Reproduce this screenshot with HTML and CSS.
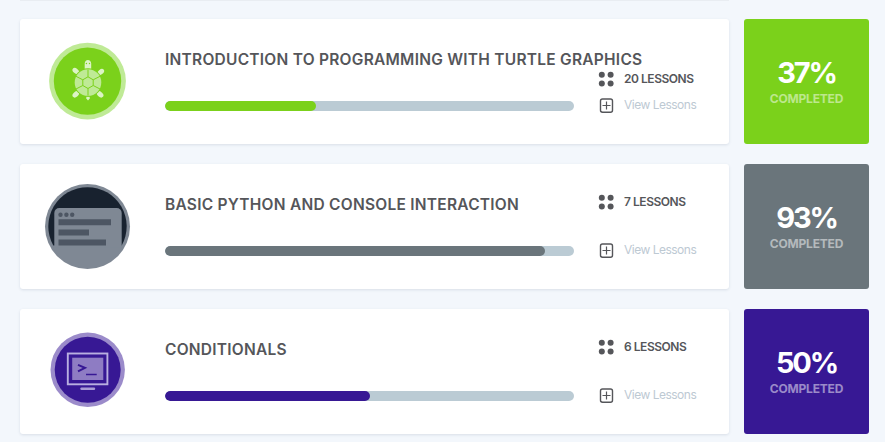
FILE: index.html
```html
<!DOCTYPE html>
<html lang="en">
<head>
<meta charset="utf-8">
<title>Lessons</title>
<link rel="stylesheet" href="styles.css">
</head>
<body>
<svg width="0" height="0" class="defs">
  <symbol id="dots" viewBox="0 0 16 16"><g fill="#55565a"><circle cx="3.8" cy="3.8" r="3"/><circle cx="12.6" cy="3.8" r="3"/><circle cx="3.8" cy="12.5" r="3"/><circle cx="12.6" cy="12.5" r="3"/></g></symbol>
  <symbol id="plus" viewBox="0 0 16 16"><g fill="none" stroke="#55565a"><rect x="2.5" y="2" width="12" height="13.2" rx="2" stroke-width="1.4"/><path d="M8.5 4.500v8M4.500 8.500h8" stroke-width="1.2"/></g></symbol>
</svg>
<div class="previous"></div>
<main class="list">
  <section class="row green">
    <div class="card crowded">
      <svg class="badge" viewBox="-0.5 0.5 90 90">
        <circle cx="45" cy="44.6" r="38.4" fill="#bfea96"/><circle cx="45" cy="44.6" r="33.7" fill="#7bd11b"/>
        <g fill="#dcf4c5">
          <path d="M42.2 32.5V27c0-2 1.400-3.600 3.200-3.600s3.300 1.600 3.300 3.600v5.500z"/>
          <ellipse cx="33.300" cy="34.500" rx="2.500" ry="3.800" transform="rotate(-48 33.300 34.500)"/>
          <ellipse cx="58.300" cy="35.500" rx="2.500" ry="3.800" transform="rotate(48 58.300 35.500)"/>
          <ellipse cx="33.300" cy="57.800" rx="2.500" ry="3.800" transform="rotate(48 33.300 57.800)"/>
          <ellipse cx="57.600" cy="57.800" rx="2.500" ry="3.800" transform="rotate(-48 57.600 57.800)"/>
          <path d="M43.800 60h3.400v2l-1.700 2-1.700-2z"/>
        </g>
        <circle cx="45.500" cy="46" r="14.300" fill="#7bd11b"/><circle cx="45.500" cy="46" r="13.300" fill="#bfea96"/>
        <path d="M45.500 40.300l5.200 3v5.700l-5.200 3-5.200-3v-5.700zM45.500 40.300V33M45.500 52v7M50.700 43.300l6.800-3.500M40.300 43.300l-6.800-3.500M50.700 49l6.800 3.500M40.300 49l-6.800 3.500" fill="none" stroke="#7bd11b" stroke-width="1"/>
        <circle cx="43.900" cy="27" r=".7" fill="#7bd11b"/><circle cx="47" cy="27" r=".7" fill="#7bd11b"/>
      </svg>
      <div class="main"><h2 class="title">INTRODUCTION TO PROGRAMMING WITH TURTLE GRAPHICS</h2><div class="track"><div class="fill" style="width:37%"></div></div></div>
      <div class="meta"><div class="item count"><svg><use href="#dots"/></svg><span>20 LESSONS</span></div><div class="item view"><svg><use href="#plus"/></svg><span>View Lessons</span></div></div>
    </div>
    <div class="tile"><strong>37%</strong><span>COMPLETED</span></div>
  </section>
  <section class="row gray">
    <div class="card">
      <svg class="badge" viewBox="-0.5 0.5 90 90">
        <circle cx="45" cy="45" r="42.500" fill="#7f8894"/>
        <path d="M10.800 64A39.200 39.200 0 1 1 79.200 64z" fill="#18222f"/>
        <path d="M11.800 66V31.500a5 5 0 0 1 5-5h57.400a5 5 0 0 1 5 5V66z" fill="#7f8894"/>
        <g fill="#4d5663"><circle cx="18" cy="33.200" r="2.200"/><circle cx="23.900" cy="33.200" r="2.200"/><circle cx="29.700" cy="33.200" r="2.200"/><path d="M16 37.800h52.500v6H16zM16 47.900h30.500v6H16zM16 57.900h47.500v6H16z"/></g>
      </svg>
      <div class="main"><h2 class="title">BASIC PYTHON AND CONSOLE INTERACTION</h2><div class="track"><div class="fill" style="width:93%"></div></div></div>
      <div class="meta"><div class="item count"><svg><use href="#dots"/></svg><span>7 LESSONS</span></div><div class="item view"><svg><use href="#plus"/></svg><span>View Lessons</span></div></div>
    </div>
    <div class="tile"><strong>93%</strong><span>COMPLETED</span></div>
  </section>
  <section class="row purple">
    <div class="card">
      <svg class="badge" viewBox="-0.5 0.5 90 90">
        <circle cx="45.200" cy="43.300" r="37.200" fill="#9b8bca"/><circle cx="45.200" cy="43.300" r="33" fill="#371894"/>
        <rect x="25.300" y="27" width="39.600" height="30.800" fill="none" stroke="#b9afe0" stroke-width="1.900"/>
        <path d="M29.700 31.200h31.100v22.300H29.700z" fill="#8e7cc3"/>
        <path d="M35.500 38.300l7 3.100-7 3.500" fill="none" stroke="#371894" stroke-width="2"/><path d="M43.500 48h10.700" stroke="#371894" stroke-width="1.500"/>
        <path d="M39 62.200h12.500" stroke="#a99bd5" stroke-width="2.400" stroke-linecap="round"/>
      </svg>
      <div class="main"><h2 class="title">CONDITIONALS</h2><div class="track"><div class="fill" style="width:50%"></div></div></div>
      <div class="meta"><div class="item count"><svg><use href="#dots"/></svg><span>6 LESSONS</span></div><div class="item view"><svg><use href="#plus"/></svg><span>View Lessons</span></div></div>
    </div>
    <div class="tile"><strong>50%</strong><span>COMPLETED</span></div>
  </section>
</main>
</body>
</html>
```
FILE: styles.css
```css
* { box-sizing: border-box; }
body { margin: 0; height: 442px; overflow: hidden; background: #f3f7fc; font-family: Inter, sans-serif; color: #55565a; }
.defs { display: block; height: 0; }
.previous { width: 709px; height: 1px; margin-left: 20px; background: #e9edf2; }
.list { display: flex; flex-direction: column; gap: 20px; padding: 18px 16px 0 20px; }
.row { display: flex; gap: 15px; height: 125px; }
.card { display: flex; width: 709px; background: #fff; border-radius: 3px; box-shadow: 0 1px 3px rgba(40, 60, 90, .13); }
.badge { width: 90px; height: 90px; margin: 18px 33px 0 22px; flex: none; }
.main { width: 409px; padding-top: 30px; }
.title { margin: 0; height: 22px; font-size: 15.500px; line-height: 22px; font-weight: 600; letter-spacing: .25px; white-space: nowrap; }
.track { height: 10px; margin-top: 30px; border-radius: 5px; background: #bbcbd4; overflow: hidden; }
.fill { height: 10px; border-radius: 5px; background: var(--accent); }
.meta { margin-left: 24px; padding-top: 30px; display: flex; flex-direction: column; gap: 32px; }
.crowded .meta { padding-top: 52px; gap: 10px; }
.item { display: flex; align-items: center; height: 16px; gap: 10px; font-size: 12px; white-space: nowrap; }
.item svg { width: 16px; height: 16px; }
.item span { line-height: 16px; }
.count { font-weight: 600; letter-spacing: -.46px; }
.view span { color: #bdc9d3; letter-spacing: -.5px; }
.tile { width: 125px; border-radius: 3px; background: var(--accent); display: flex; flex-direction: column; align-items: center; color: #fff; padding-top: 37px; }
.tile strong { font-size: 29px; line-height: 34px; font-weight: 700; letter-spacing: -2.200px; }
.tile span { font-size: 12px; line-height: 18px; font-weight: 700; letter-spacing: -.2px; color: rgba(255, 255, 255, .5); }
.green { --accent: #7bd11b; }
.gray { --accent: #6a757b; }
.purple { --accent: #371894; }
```
